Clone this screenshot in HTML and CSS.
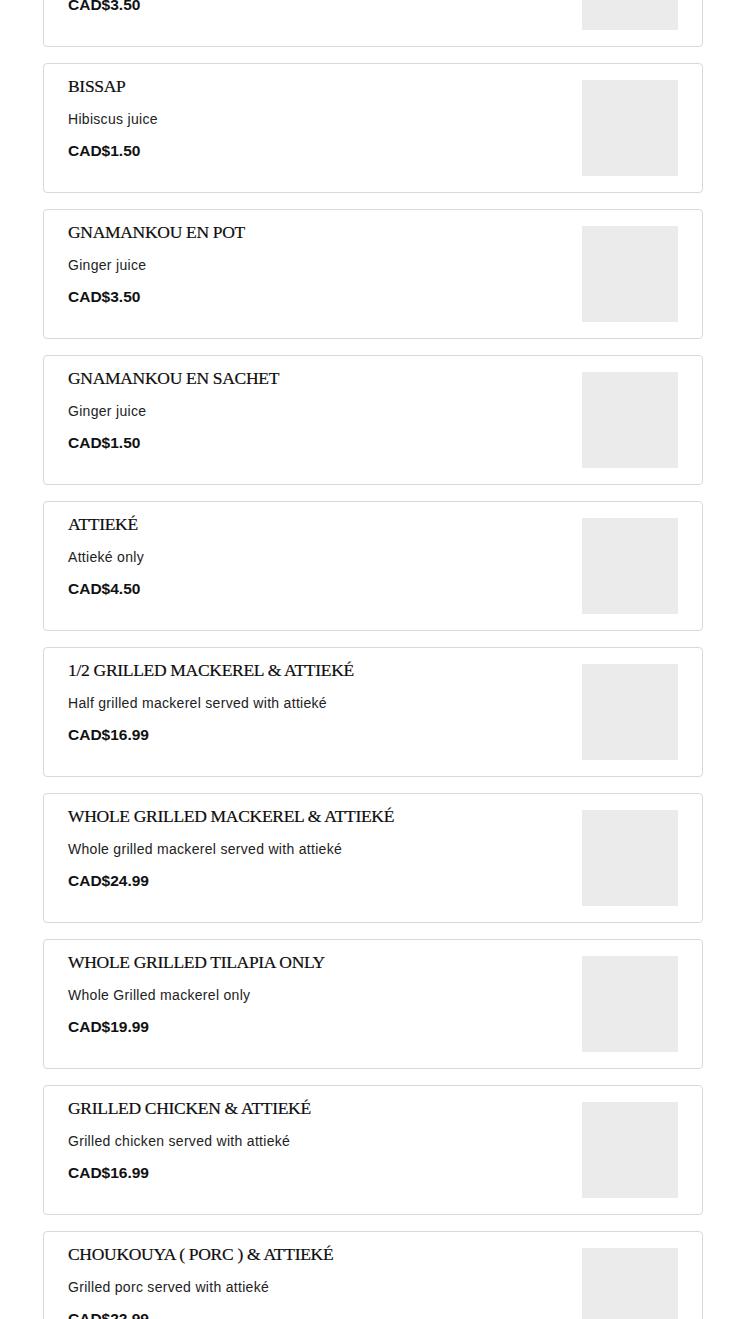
FILE: index.html
```html
<!DOCTYPE html>
<html lang="en">
<head>
<meta charset="utf-8">
<title>Menu</title>
<link rel="stylesheet" href="styles.css">
</head>
<body>
<main class="menu">
  <article class="item">
    <div class="info">
      <h3 class="title">GNAMANKOU EN BOUTEILLE</h3>
      <p class="desc">Ginger juice</p>
      <p class="price">CAD$3.50</p>
    </div>
    <div class="thumb"></div>
  </article>
  <article class="item">
    <div class="info">
      <h3 class="title">BISSAP</h3>
      <p class="desc">Hibiscus juice</p>
      <p class="price">CAD$1.50</p>
    </div>
    <div class="thumb"></div>
  </article>
  <article class="item">
    <div class="info">
      <h3 class="title">GNAMANKOU EN POT</h3>
      <p class="desc">Ginger juice</p>
      <p class="price">CAD$3.50</p>
    </div>
    <div class="thumb"></div>
  </article>
  <article class="item">
    <div class="info">
      <h3 class="title">GNAMANKOU EN SACHET</h3>
      <p class="desc">Ginger juice</p>
      <p class="price">CAD$1.50</p>
    </div>
    <div class="thumb"></div>
  </article>
  <article class="item">
    <div class="info">
      <h3 class="title">ATTIEKÉ</h3>
      <p class="desc">Attieké only</p>
      <p class="price">CAD$4.50</p>
    </div>
    <div class="thumb"></div>
  </article>
  <article class="item">
    <div class="info">
      <h3 class="title">1/2 GRILLED MACKEREL &amp; ATTIEKÉ</h3>
      <p class="desc">Half grilled mackerel served with attieké</p>
      <p class="price">CAD$16.99</p>
    </div>
    <div class="thumb"></div>
  </article>
  <article class="item">
    <div class="info">
      <h3 class="title">WHOLE GRILLED MACKEREL &amp; ATTIEKÉ</h3>
      <p class="desc">Whole grilled mackerel served with attieké</p>
      <p class="price">CAD$24.99</p>
    </div>
    <div class="thumb"></div>
  </article>
  <article class="item">
    <div class="info">
      <h3 class="title">WHOLE GRILLED TILAPIA ONLY</h3>
      <p class="desc">Whole Grilled mackerel only</p>
      <p class="price">CAD$19.99</p>
    </div>
    <div class="thumb"></div>
  </article>
  <article class="item">
    <div class="info">
      <h3 class="title">GRILLED CHICKEN &amp; ATTIEKÉ</h3>
      <p class="desc">Grilled chicken served with attieké</p>
      <p class="price">CAD$16.99</p>
    </div>
    <div class="thumb"></div>
  </article>
  <article class="item">
    <div class="info">
      <h3 class="title">CHOUKOUYA ( PORC ) &amp; ATTIEKÉ</h3>
      <p class="desc">Grilled porc served with attieké</p>
      <p class="price">CAD$22.99</p>
    </div>
    <div class="thumb"></div>
  </article>
</main>
</body>
</html>
```
FILE: styles.css
```css
html, body {
  margin: 0;
  padding: 0;
  background: #ffffff;
}
body {
  overflow: hidden;
}
.menu {
  display: flex;
  flex-direction: column;
  gap: 16px;
  width: 660px;
  margin: -83px 0 0 43px;
}
.item {
  display: flex;
  align-items: flex-start;
  justify-content: space-between;
  box-sizing: border-box;
  height: 130px;
  padding: 12px 24px 16px 24px;
  border: 1px solid #d9d9d9;
  border-radius: 4px;
  background: #fff;
}
.info {
  display: flex;
  flex-direction: column;
  min-width: 0;
}
.title {
  margin: 0;
  font-family: "Liberation Serif", "Times New Roman", serif;
  font-size: 17.5px;
  line-height: 20px;
  letter-spacing: -0.3px;
  font-weight: normal;
  color: #0d0d0d;
  -webkit-text-stroke: 0.2px #0d0d0d;
}
.desc {
  margin: 13px 0 0 0;
  font-family: "Liberation Sans", Arial, sans-serif;
  font-size: 14px;
  line-height: 20px;
  letter-spacing: 0.3px;
  color: #222;
}
.price {
  margin: 12px 0 0 0;
  font-family: "Liberation Sans", Arial, sans-serif;
  font-size: 15.5px;
  line-height: 20px;
  font-weight: bold;
  color: #111;
}
.thumb {
  flex: none;
  width: 96px;
  height: 96px;
  margin-top: 4px;
  background: #ebebeb;
}
```
